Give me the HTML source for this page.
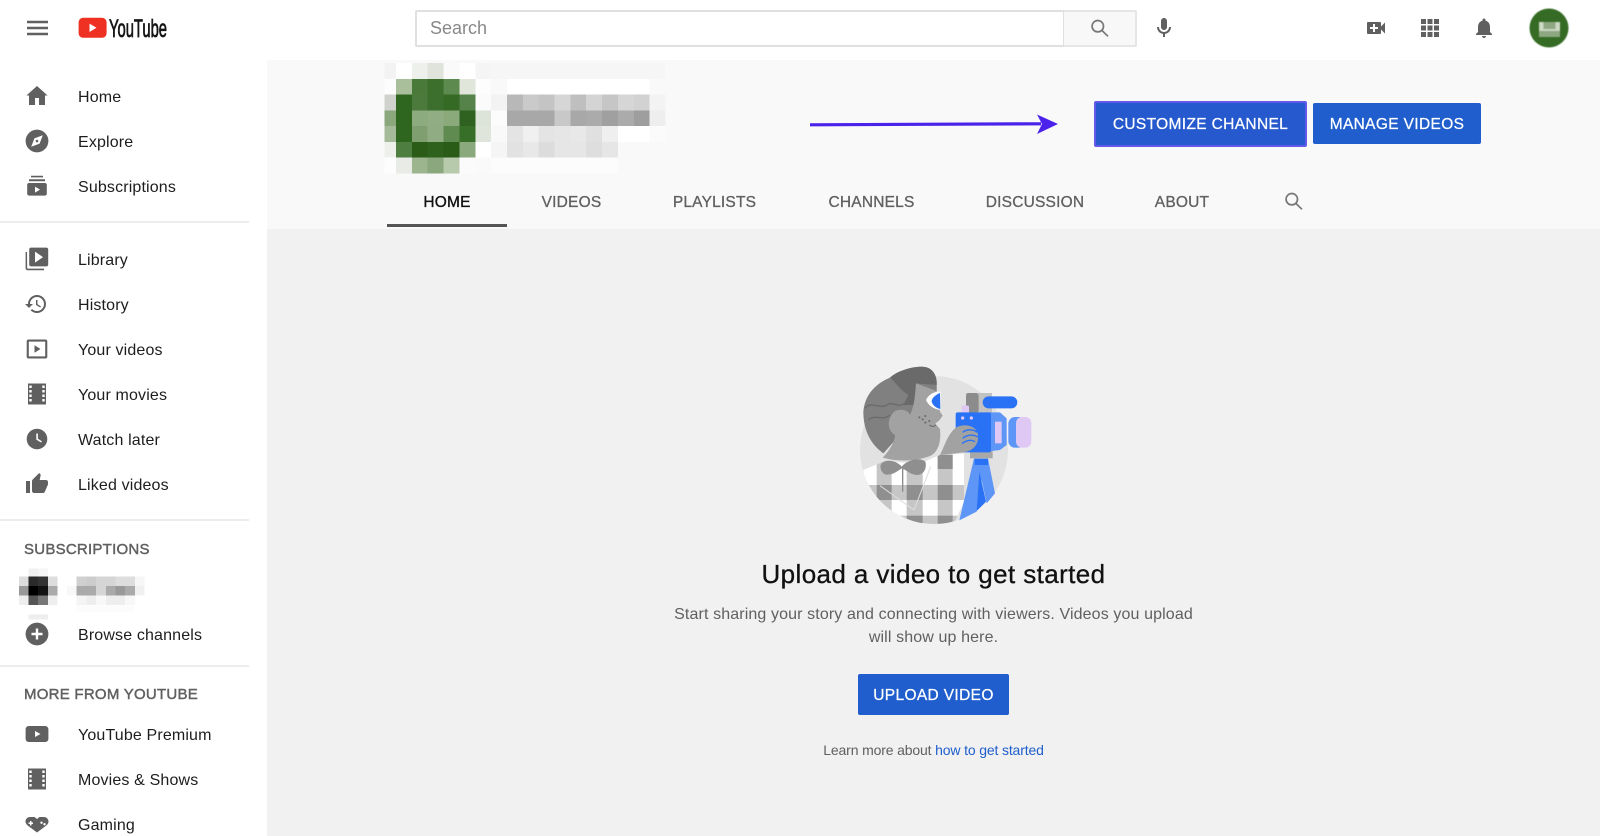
<!DOCTYPE html>
<html><head><meta charset="utf-8"><title>YouTube channel</title>
<style>
html,body{margin:0;padding:0;width:1600px;height:836px;overflow:hidden;background:#fff;font-family:"Liberation Sans",sans-serif}
.a{position:absolute;white-space:nowrap}
.n{left:78px;font-size:16px;letter-spacing:.15px;color:#1d1d1d;line-height:20px;margin-top:1.5px}
.i{position:absolute;left:25px;width:24px;height:24px;fill:#606060}
.d{position:absolute;left:0;width:249px;height:2px;background:#ececec}
.h{left:24px;font-size:15px;letter-spacing:.25px;color:#606060;-webkit-text-stroke:.45px #606060;line-height:20px;margin-top:1.5px}
.t{top:192.5px;font-size:15.5px;letter-spacing:.2px;color:#606060;line-height:20px;transform:translateX(-50%);-webkit-text-stroke:.3px #606060}
.b{position:absolute;background:#1f5ecc;color:#fff;font-size:15.5px;letter-spacing:.35px;text-align:center;border-radius:2px;box-sizing:border-box;-webkit-text-stroke:.25px #fff}
</style></head><body>
<div class="a" style="left:267px;top:60px;width:1333px;height:776px;background:#f1f1f1"></div>
<div class="a" style="left:267px;top:60px;width:1333px;height:169px;background:#f9f9f9"></div>

<svg class="a" style="left:27px;top:20px" width="21" height="16"><path d="M0 .8h21v2.500H0zM0 6.800h21v2.500H0zM0 12.800h21v2.500H0z" fill="#606060"/></svg>
<svg class="a" style="left:78px;top:16px" width="92" height="24" viewBox="0 0 92 24">
<rect x=".6" y="1.800" width="28" height="20" rx="4.500" fill="#ef3124"/><path d="M11.500 7.600 18.500 11.800 11.500 16z" fill="#fff"/>
<text x="31" y="20.800" font-family="'Liberation Sans',sans-serif" font-size="25" textLength="58" lengthAdjust="spacingAndGlyphs" fill="#151515" stroke="#151515" stroke-width=".8">YouTube</text></svg>

<div class="a" style="left:415px;top:10px;width:650px;height:37px;background:#fff;border:2px solid #e0e0e0;box-sizing:border-box;border-radius:2px 0 0 2px"></div>
<div class="a" style="left:1064px;top:10px;width:73px;height:37px;background:#f8f8f8;border:2px solid #e6e6e6;border-left:0;box-sizing:border-box;border-radius:0 2px 2px 0"></div>
<div class="a" style="left:430px;top:17px;font-size:18px;color:#888;line-height:22px">Search</div>
<svg class="a" style="left:1088px;top:16px" width="24" height="24" viewBox="0 0 24 24" fill="none" stroke="#777" stroke-width="1.700"><circle cx="9.800" cy="10.200" r="5.700"/><path d="M14 14.500 20 20.300"/></svg>
<svg class="a" style="left:1152px;top:16px" width="24" height="24" viewBox="0 0 24 24" fill="#606060"><path d="M12 14c1.660 0 3-1.340 3-3V5c0-1.660-1.340-3-3-3S9 3.340 9 5v6c0 1.660 1.340 3 3 3zM17 11c0 2.760-2.240 5-5 5s-5-2.240-5-5H5c0 3.530 2.610 6.430 6 6.920V21h2v-3.080c3.390-.49 6-3.390 6-6.920h-2z"/></svg>
<svg class="a" style="left:1364px;top:16px" width="24" height="24" viewBox="0 0 24 24" fill="#606060"><path d="M17 10.500V7c0-.55-.45-1-1-1H4c-.55 0-1 .45-1 1v10c0 .55.45 1 1 1h12c.55 0 1-.45 1-1v-3.500l4 4v-11l-4 4zM14 13h-3v3H9v-3H6v-2h3V8h2v3h3v2z"/></svg>
<svg class="a" style="left:1418px;top:16px" width="24" height="24" viewBox="0 0 24 24" fill="#606060"><path d="M3 3h5v5H3zM9.500 3h5v5h-5zM16 3h5v5h-5zM3 9.500h5v5H3zM9.500 9.500h5v5h-5zM16 9.500h5v5h-5zM3 16h5v5H3zM9.500 16h5v5h-5zM16 16h5v5h-5z"/></svg>
<svg class="a" style="left:1472px;top:16px" width="24" height="24" viewBox="0 0 24 24" fill="#606060"><path d="M12 22c1.100 0 2-.9 2-2h-4c0 1.100.89 2 2 2zm6-6v-5c0-3.070-1.640-5.640-4.500-6.320V4c0-.83-.67-1.500-1.500-1.500s-1.500.67-1.500 1.500v.68C7.630 5.360 6 7.920 6 11v5l-2 2v1h16v-1l-2-2z"/></svg>
<svg class="a" style="left:1528px;top:7px;filter:blur(.6px)" width="42" height="42" viewBox="0 0 42 42"><circle cx="21" cy="21" r="19.500" fill="#356b24"/><rect x="11" y="15" width="21" height="15" fill="#8fa883"/><path d="M11 15h4.500v7h12v-7H32v9H11z" fill="#cdd8c5"/></svg>

<svg class="i" style="top:84px" viewBox="0 0 24 24"><path d="M10 21v-7h4v7h6v-9.500h2.600L12 2 1.400 11.500H4V21z"/></svg>
<div class="a n" style="top:86px">Home</div>
<svg class="i" style="top:129px" viewBox="0 0 24 24"><circle cx="12" cy="12" r="11.400"/><path d="M17.800 6.200 14.600 14.600 6.200 17.800 9.400 9.400z" fill="#fff"/><circle cx="12" cy="12" r="1.300"/></svg>
<div class="a n" style="top:131px">Explore</div>
<svg class="i" style="top:174px" viewBox="0 0 24 24"><path d="M6 1.800h12v1.600H6zM4 5.200h16v2H4zM4 9h16c1 0 1.800.8 1.800 1.800v9c0 1-.8 1.800-1.800 1.800H4c-1 0-1.800-.8-1.800-1.800v-9C2.200 9.800 3 9 4 9zm6 3.600v6l5-3z" fill-rule="evenodd"/></svg>
<div class="a n" style="top:176px">Subscriptions</div>
<div class="d" style="top:221px"></div>
<svg class="i" style="top:247px" viewBox="0 0 24 24"><path d="M2 5H.6v16.400c0 1 .8 1.800 1.800 1.800H19v-1.600H2.200z"/><path d="M6 .6h15.400c1 0 1.800.8 1.800 1.800v15.200c0 1-.8 1.800-1.800 1.800H6c-1 0-1.800-.8-1.800-1.800V2.400c0-1 .8-1.800 1.800-1.800zM10 4.600v11l8-5.500z" fill-rule="evenodd"/></svg>
<div class="a n" style="top:249px">Library</div>
<svg class="i" style="top:292px;left:24px" viewBox="0 0 24 24"><path d="M13 3c-4.970 0-9 4.030-9 9H1l3.890 3.890.07.14L9 12H6c0-3.870 3.130-7 7-7s7 3.130 7 7-3.130 7-7 7c-1.930 0-3.680-.79-4.940-2.060l-1.420 1.420C8.270 19.990 10.510 21 13 21c4.970 0 9-4.030 9-9s-4.030-9-9-9zm-1 5v5l4.280 2.540.72-1.210-3.500-2.080V8H12z"/></svg>
<div class="a n" style="top:294px">History</div>
<svg class="i" style="top:337px" viewBox="0 0 24 24"><path d="M3.500 2.500h17c1 0 1.800.8 1.800 1.800v15.400c0 1-.8 1.800-1.800 1.800h-17c-1 0-1.800-.8-1.800-1.800V4.300c0-1 .8-1.800 1.800-1.800zM3.800 4.600v14.800h16.400V4.600zM9.500 8.300v7.400l6-3.700z" fill-rule="evenodd"/></svg>
<div class="a n" style="top:339px">Your videos</div>
<svg class="i" style="top:382px" viewBox="0 0 24 24"><path d="M3 1.500h18v21H3zM4.300 3.500v2.500h2.400V3.500zM4.300 8v2.500h2.400V8zM4.300 12.500V15h2.400v-2.500zM4.300 17v2.500h2.400V17zM17.300 3.500v2.500h2.400V3.500zM17.300 8v2.500h2.400V8zM17.300 12.500V15h2.400v-2.500zM17.300 17v2.500h2.400V17z" fill-rule="evenodd"/></svg>
<div class="a n" style="top:384px">Your movies</div>
<svg class="i" style="top:427px" viewBox="0 0 24 24"><circle cx="12" cy="12" r="10.300"/><path d="M11.300 6.500h1.600v5.300l4 2.400-.8 1.300-4.800-2.900z" fill="#fff"/></svg>
<div class="a n" style="top:429px">Watch later</div>
<svg class="i" style="top:472px" viewBox="0 0 24 24"><path d="M1 21h4V9H1v12zm22-11c0-1.100-.9-2-2-2h-6.310l.95-4.570.03-.32c0-.41-.17-.79-.44-1.060L14.170 1 7.590 7.590C7.220 7.950 7 8.450 7 9v10c0 1.100.9 2 2 2h9c.83 0 1.540-.5 1.840-1.220l3.020-7.050c.09-.23.14-.47.14-.73v-2z"/></svg>
<div class="a n" style="top:474px">Liked videos</div>
<div class="d" style="top:519px"></div>
<div class="a h" style="top:538px">SUBSCRIPTIONS</div>

<svg class="a" style="left:0;top:560px" width="160" height="70" shape-rendering="crispEdges">
<g transform="translate(19,8.300)">
<rect x="9.600" y="0" width="9.600" height="8" fill="#f0f0f0"/><rect x="19.200" y="0" width="9.600" height="8" fill="#f5f5f5"/>
<rect x="0" y="8" width="9.600" height="9.700" fill="#ddd"/><rect x="9.600" y="8" width="9.600" height="9.700" fill="#2a2a2a"/><rect x="19.200" y="8" width="9.600" height="9.700" fill="#333"/><rect x="28.800" y="8" width="9.600" height="9.700" fill="#ddd"/>
<rect x="0" y="17.700" width="9.600" height="9.700" fill="#999"/><rect x="9.600" y="17.700" width="9.600" height="9.700" fill="#000"/><rect x="19.200" y="17.700" width="9.600" height="9.700" fill="#111"/><rect x="28.800" y="17.700" width="9.600" height="9.700" fill="#aaa"/>
<rect x="0" y="27.400" width="9.600" height="9.400" fill="#eee"/><rect x="9.600" y="27.400" width="9.600" height="9.400" fill="#555"/><rect x="19.200" y="27.400" width="9.600" height="9.400" fill="#777"/><rect x="28.800" y="27.400" width="9.600" height="9.400" fill="#eee"/>
<rect x="9.600" y="46.400" width="19.200" height="4.700" fill="#eee"/>
</g>
<g transform="translate(67,16.300)">
<rect x="9.700" y="0" width="9.700" height="9.700" fill="#d0d0d0"/><rect x="19.400" y="0" width="9.700" height="9.700" fill="#ccc"/><rect x="29.100" y="0" width="9.700" height="9.700" fill="#d5d5d5"/><rect x="38.800" y="0" width="9.700" height="9.700" fill="#d5d5d5"/><rect x="48.500" y="0" width="9.700" height="9.700" fill="#ddd"/><rect x="58.200" y="0" width="9.700" height="9.700" fill="#ddd"/><rect x="67.900" y="0" width="9.700" height="9.700" fill="#f6f6f6"/>
<rect x="0" y="9.700" width="9.700" height="9.700" fill="#f8f8f8"/><rect x="9.700" y="9.700" width="9.700" height="9.700" fill="#aaa"/><rect x="19.400" y="9.700" width="9.700" height="9.700" fill="#aaa"/><rect x="29.100" y="9.700" width="9.700" height="9.700" fill="#d5d5d5"/><rect x="38.800" y="9.700" width="9.700" height="9.700" fill="#aaa"/><rect x="48.500" y="9.700" width="9.700" height="9.700" fill="#999"/><rect x="58.200" y="9.700" width="9.700" height="9.700" fill="#aaa"/><rect x="67.900" y="9.700" width="9.700" height="9.700" fill="#f0f0f0"/>
<rect x="9.700" y="19.400" width="9.700" height="9.400" fill="#f4f4f4"/><rect x="19.400" y="19.400" width="9.700" height="9.400" fill="#eee"/><rect x="29.100" y="19.400" width="9.700" height="9.400" fill="#f8f8f8"/><rect x="38.800" y="19.400" width="9.700" height="9.400" fill="#eee"/><rect x="48.500" y="19.400" width="9.700" height="9.400" fill="#eee"/><rect x="58.200" y="19.400" width="9.700" height="9.400" fill="#f8f8f8"/>
<rect x="9.700" y="29" width="58" height="7" fill="#fcfcfc"/>
</g></svg>

<svg class="i" style="top:622px" viewBox="0 0 24 24"><circle cx="12" cy="12" r="11.400"/><path d="M10.800 6.500h2.400v4.300h4.300v2.400h-4.300v4.300h-2.400v-4.300H6.500v-2.400h4.300z" fill="#fff"/></svg>
<div class="a n" style="top:624px">Browse channels</div>
<div class="d" style="top:665px"></div>
<div class="a h" style="top:683px">MORE FROM YOUTUBE</div>
<svg class="i" style="top:722px" viewBox="0 0 24 24"><path d="M4 4h16c2 0 3.400 1.400 3.400 3.400v9.200c0 2-1.400 3.400-3.400 3.400H4c-2 0-3.400-1.400-3.400-3.400V7.400C.6 5.400 2 4 4 4zm6 5v6l5.500-3z" fill-rule="evenodd"/></svg>
<div class="a n" style="top:724px">YouTube Premium</div>
<svg class="i" style="top:767px" viewBox="0 0 24 24"><path d="M3 1.500h18v21H3zM4.300 3.500v2.500h2.400V3.500zM4.300 8v2.500h2.400V8zM4.300 12.500V15h2.400v-2.500zM4.300 17v2.500h2.400V17zM17.300 3.500v2.500h2.400V3.500zM17.300 8v2.500h2.400V8zM17.300 12.500V15h2.400v-2.500zM17.300 17v2.500h2.400V17z" fill-rule="evenodd"/></svg>
<div class="a n" style="top:769px">Movies &amp; Shows</div>
<svg class="i" style="top:812px" viewBox="0 0 24 24"><path d="M5 5h4.500L12 7l2.500-2H19c2.500 0 4.500 2 4.500 4.500 0 3-3 4.500-5.500 6.500l-6 4.500L6 16C3.500 14 .5 12.500.5 9.500.5 7 2.500 5 5 5zM5 9v1.500H3.500V12H5v1.500h1.500V12H8v-1.500H6.500V9zM16.500 9.500a1.200 1.200 0 1 0 .01 0zM19.500 11a1.200 1.200 0 1 0 .01 0z" fill-rule="evenodd"/></svg>
<div class="a n" style="top:814px">Gaming</div>

<svg class="a" style="left:0;top:0" width="700" height="190" shape-rendering="crispEdges">
<g transform="translate(380.150,63) scale(15.850,15.750)">
<rect x=".29" y="0" width=".71" height="1" fill="#f3f3f3"/><rect x="1" y="0" width="1" height="1" fill="#fff"/><rect x="2" y="0" width="1" height="1" fill="#eef0ec"/><rect x="3" y="0" width="1" height="1" fill="#dfe3db"/><rect x="4" y="0" width="1" height="1" fill="#fafafa"/><rect x="5" y="0" width="1" height="1" fill="#fff"/><rect x="6" y="0" width="1" height="1" fill="#f5f5f5"/>
<rect x=".29" y="1" width=".71" height="1" fill="#fdfdfd"/><rect x="1" y="1" width="1" height="1" fill="#a9bf9c"/><rect x="2" y="1" width="1" height="1" fill="#4a7a3a"/><rect x="3" y="1" width="1" height="1" fill="#3c6f2c"/><rect x="4" y="1" width="1" height="1" fill="#5d8a4e"/><rect x="5" y="1" width="1" height="1" fill="#e0e6da"/><rect x="6" y="1" width="1" height="1" fill="#fdfdfd"/>
<rect x=".29" y="2" width=".71" height="1" fill="#cfd2cd"/><rect x="1" y="2" width="1" height="1" fill="#2f661f"/><rect x="2" y="2" width="1" height="1" fill="#4c7a3d"/><rect x="3" y="2" width="1" height="1" fill="#3c6e2d"/><rect x="4" y="2" width="1" height="1" fill="#356a25"/><rect x="5" y="2" width="1" height="1" fill="#55834a"/><rect x="6" y="2" width="1" height="1" fill="#fbfbfb"/>
<rect x=".29" y="3" width=".71" height="1" fill="#8ba87d"/><rect x="1" y="3" width="1" height="1" fill="#2f661f"/><rect x="2" y="3" width="1" height="1" fill="#8cab7e"/><rect x="3" y="3" width="1" height="1" fill="#90ad84"/><rect x="4" y="3" width="1" height="1" fill="#8aaa7c"/><rect x="5" y="3" width="1" height="1" fill="#2f6120"/><rect x="6" y="3" width="1" height="1" fill="#dce3d8"/>
<rect x=".29" y="4" width=".71" height="1" fill="#a5ba98"/><rect x="1" y="4" width="1" height="1" fill="#2f661f"/><rect x="2" y="4" width="1" height="1" fill="#7f9f70"/><rect x="3" y="4" width="1" height="1" fill="#90ac83"/><rect x="4" y="4" width="1" height="1" fill="#5f8a50"/><rect x="5" y="4" width="1" height="1" fill="#386f28"/><rect x="6" y="4" width="1" height="1" fill="#e0e5dc"/>
<rect x=".29" y="5" width=".71" height="1" fill="#eef0ec"/><rect x="1" y="5" width="1" height="1" fill="#4f7f40"/><rect x="2" y="5" width="1" height="1" fill="#2a5c18"/><rect x="3" y="5" width="1" height="1" fill="#2d611c"/><rect x="4" y="5" width="1" height="1" fill="#2a5c18"/><rect x="5" y="5" width="1" height="1" fill="#8aaa7d"/><rect x="6" y="5" width="1" height="1" fill="#fff"/>
<rect x=".29" y="6" width=".71" height="1" fill="#fdfdfd"/><rect x="1" y="6" width="1" height="1" fill="#e9ece6"/><rect x="2" y="6" width="1" height="1" fill="#9cb58f"/><rect x="3" y="6" width="1" height="1" fill="#8aa77e"/><rect x="4" y="6" width="1" height="1" fill="#b8caac"/><rect x="5" y="6" width="1" height="1" fill="#fbfbfb"/><rect x="6" y="6" width="1" height="1" fill="#fafafa"/>
<rect x="7" y="0" width="11" height="1" fill="#f6f6f6"/><rect x="8" y="1" width="9" height="1" fill="#fff"/>
<rect x="7" y="2" width="1" height="1" fill="#f3f3f3"/><rect x="8" y="2" width="1" height="1" fill="#b8b8b8"/><rect x="9" y="2" width="1" height="1" fill="#cacaca"/><rect x="10" y="2" width="1" height="1" fill="#c4c4c4"/><rect x="11" y="2" width="1" height="1" fill="#d6d6d6"/><rect x="12" y="2" width="1" height="1" fill="#bfbfbf"/><rect x="13" y="2" width="1" height="1" fill="#d4d4d4"/><rect x="14" y="2" width="1" height="1" fill="#c6c6c6"/><rect x="15" y="2" width="1" height="1" fill="#d6d6d6"/><rect x="16" y="2" width="1" height="1" fill="#d2d2d2"/><rect x="17" y="2" width="1" height="1" fill="#f3f3f3"/>
<rect x="7" y="3" width="1" height="1" fill="#fcfcfc"/><rect x="8" y="3" width="3" height="1" fill="#a8a8a8"/><rect x="11" y="3" width="1" height="1" fill="#c8c8c8"/><rect x="12" y="3" width="1" height="1" fill="#a8a8a8"/><rect x="13" y="3" width="1" height="1" fill="#ababab"/><rect x="14" y="3" width="1" height="1" fill="#a0a0a0"/><rect x="15" y="3" width="1" height="1" fill="#ababab"/><rect x="16" y="3" width="1" height="1" fill="#9e9e9e"/><rect x="17" y="3" width="1" height="1" fill="#eee"/>
<rect x="7" y="4" width="1" height="1" fill="#f9f9f9"/><rect x="8" y="4" width="1" height="1" fill="#e4e4e4"/><rect x="9" y="4" width="1" height="1" fill="#f0f0f0"/><rect x="10" y="4" width="1" height="1" fill="#e4e4e4"/><rect x="11" y="4" width="1" height="1" fill="#e6e6e6"/><rect x="12" y="4" width="1" height="1" fill="#e8e8e8"/><rect x="13" y="4" width="1" height="1" fill="#e0e0e0"/><rect x="14" y="4" width="1" height="1" fill="#efefef"/><rect x="15" y="4" width="2" height="1" fill="#fff"/><rect x="17" y="4" width="1" height="1" fill="#fbfbfb"/>
<rect x="7" y="5" width="1" height="1" fill="#f5f5f5"/><rect x="8" y="5" width="1" height="1" fill="#e2e2e2"/><rect x="9" y="5" width="1" height="1" fill="#e8e8e8"/><rect x="10" y="5" width="1" height="1" fill="#dcdcdc"/><rect x="11" y="5" width="1" height="1" fill="#e6e6e6"/><rect x="12" y="5" width="1" height="1" fill="#e6e6e6"/><rect x="13" y="5" width="1" height="1" fill="#dedede"/><rect x="14" y="5" width="1" height="1" fill="#e6e6e6"/>
<rect x="7" y="6" width="8" height="1" fill="#fcfcfc"/>
</g></svg>

<svg class="a" style="left:805px;top:110px" width="260" height="30"><path d="M5 14.800 236 13.800" stroke="#4b22ea" stroke-width="3.200" fill="none"/><path d="M232 4.500 253 14 232 24 237 14z" fill="#4b22ea"/></svg>
<div class="b" style="left:1094px;top:101px;width:213px;height:46px;line-height:44px;border:2px solid #6259ea;background:#2559cd">CUSTOMIZE CHANNEL</div>
<div class="b" style="left:1313px;top:103px;width:168px;height:41px;line-height:43px">MANAGE VIDEOS</div>

<div class="a t" style="left:447px;color:#111;-webkit-text-stroke:.35px #111">HOME</div>
<div class="a t" style="left:571.500px">VIDEOS</div>
<div class="a t" style="left:714.500px">PLAYLISTS</div>
<div class="a t" style="left:871.500px">CHANNELS</div>
<div class="a t" style="left:1035px">DISCUSSION</div>
<div class="a t" style="left:1182px">ABOUT</div>
<div class="a" style="left:387px;top:224px;width:120px;height:3px;background:#555"></div>
<svg class="a" style="left:1282px;top:189px" width="24" height="24" viewBox="0 0 24 24" fill="none" stroke="#777" stroke-width="1.700"><circle cx="9.800" cy="10.200" r="5.700"/><path d="M14 14.500 20 20.300"/></svg>

<svg class="a" style="left:840px;top:355px" width="200" height="180" viewBox="0 0 600 540">
<defs><clipPath id="c"><circle cx="282" cy="285" r="222"/></clipPath><clipPath id="s"><path d="M70 345 130 320 240 325 300 300 372 296 372 440 340 510 100 510 70 400z"/></clipPath></defs>
<circle cx="282" cy="285" r="222" fill="#e2e2e2"/>
<g clip-path="url(#c)"><g clip-path="url(#s)">
<rect x="60" y="290" width="320" height="230" fill="#fff"/>
<g fill="#c6c6c6"><rect x="110" y="290" width="45" height="230"/><rect x="200" y="290" width="48" height="230"/><rect x="293" y="290" width="45" height="230"/><rect x="60" y="390" width="320" height="45"/><rect x="60" y="482" width="320" height="40"/></g>
<g fill="#8f8f8f"><rect x="293" y="300" width="45" height="42"/><rect x="110" y="390" width="45" height="45"/><rect x="200" y="390" width="48" height="45"/><rect x="293" y="390" width="45" height="45"/><rect x="200" y="482" width="48" height="40"/><rect x="293" y="482" width="45" height="40"/></g>
</g></g>
<path d="M120 392 222 465 272 335" fill="none" stroke="#ddd" stroke-width="3"/>
<path d="M188 335V410" stroke="#8a8a8a" stroke-width="4"/>
<path d="M70 170C75 115 110 85 150 68 175 45 230 30 260 37 285 45 292 70 290 110L240 170 200 190 170 250 130 295C95 270 70 230 70 170z" fill="#808080"/>
<path d="M150 68C175 45 230 30 260 37 285 45 292 70 290 90L228 85 222 150 190 150 205 120C175 100 170 85 150 68z" fill="#6a6a6a"/>
<path d="M75 160C95 135 120 165 140 150 160 135 175 165 200 140M85 195C105 175 125 200 150 180" fill="none" stroke="#6a6a6a" stroke-width="4"/>
<path d="M228 85 290 108 300 170 308 182 298 196 286 206 300 222C304 260 295 295 265 305 220 320 170 320 128 308 150 285 165 258 165 240 140 225 140 190 165 168 185 160 205 165 210 180 224 150 226 115 228 85z" fill="#a2a2a2"/>
<path d="M258 135C265 118 285 108 302 110V164C285 165 265 152 258 135z" fill="#fff"/>
<path d="M300 114C285 120 275 130 275 140 278 152 290 160 301 162z" fill="#2a72f5"/>
<path d="M122 330C130 310 170 315 185 335 200 315 240 305 256 320 262 340 250 362 230 360 210 358 200 345 185 340 170 350 155 362 135 358 125 352 120 342 122 330z" fill="#8f8f8f"/>
<rect x="378" y="114" width="78" height="60" fill="#c2c2c2"/><rect x="378" y="114" width="38" height="60" rx="8" fill="#8c8c8c"/>
<rect x="428" y="124" width="104" height="36" rx="18" fill="#2a72f5"/>
<rect x="365" y="152" width="22" height="24" rx="3" fill="#e0c8f5"/>
<path d="M402 310H444L465 415 440 445 425 375 410 470 358 496z" fill="#5e96f8"/>
<path d="M418 350 438 440 410 468z" fill="#2a72f5"/>
<rect x="404" y="312" width="40" height="18" fill="#2a72f5"/>
<rect x="390" y="288" width="68" height="22" fill="#a8a8a8"/>
<path d="M440 172H480L500 190V270L480 285 440 290z" fill="#5e96f8"/>
<rect x="465" y="200" width="20" height="65" fill="#e0c8f5"/>
<rect x="347" y="172" width="106" height="120" rx="6" fill="#2a72f5"/>
<circle cx="368" cy="189" r="5" fill="#e0c8f5"/><circle cx="394" cy="189" r="5" fill="#e0c8f5"/>
<rect x="505" y="186" width="50" height="92" rx="20" fill="#5e96f8"/>
<rect x="528" y="186" width="46" height="92" rx="18" fill="#e0c8f5"/>
<path d="M300 300C315 270 322 240 345 220 365 205 410 208 414 240 418 270 395 290 370 292 350 294 325 298 300 300z" fill="#a2a2a2"/>
<path d="M368 232C380 222 400 222 412 232M368 250C382 238 400 238 414 246M366 266C380 254 395 254 405 260" fill="none" stroke="#2a72f5" stroke-width="4"/>
<g fill="#666"><circle cx="238" cy="187" r="3"/><circle cx="256" cy="183" r="3"/><circle cx="248" cy="193" r="3"/><circle cx="256" cy="203" r="3"/><circle cx="268" cy="198" r="3"/></g>
<path d="M268 210 Q278 218 288 210" fill="none" stroke="#666" stroke-width="3"/>
</svg>

<div class="a" style="left:933.500px;top:558px;transform:translateX(-50%);font-size:26px;letter-spacing:.4px;color:#111;-webkit-text-stroke:.3px #111;line-height:32px">Upload a video to get started</div>
<div class="a" style="left:933.500px;top:604px;transform:translateX(-50%);font-size:16px;letter-spacing:.12px;color:#606060;line-height:22.500px;text-align:center">Start sharing your story and connecting with viewers. Videos you upload<br>will show up here.</div>
<div class="b" style="left:858px;top:674px;width:151px;height:41px;line-height:43px">UPLOAD VIDEO</div>
<div class="a" style="left:933.500px;top:740px;transform:translateX(-50%);font-size:14px;letter-spacing:-.15px;color:#606060;line-height:20px">Learn more about <span style="color:#1f5ecc">how to get started</span></div>
</body></html>
